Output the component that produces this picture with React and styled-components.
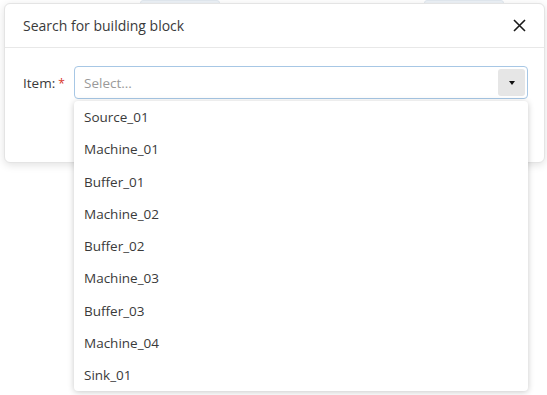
import React from "react";
import styled, { createGlobalStyle } from "styled-components";

const GlobalStyle = createGlobalStyle`
  html, body {
    margin: 0;
    padding: 0;
    background: #ffffff;
    font-family: "Open Sans", "Noto Sans", sans-serif;
    color: #3a3a3a;
  }
`;

const Page = styled.div`
  position: relative;
  width: 547px;
  height: 395px;
  overflow: hidden;
  background: #fff;
`;

const Toolbar = styled.div`
  display: flex;
  gap: 204px;
  padding: 0 0 0 140px;
`;

const GhostButton = styled.div`
  width: 78px;
  height: 28px;
  background: #eef3f8;
  border: 1px solid #e2e9f0;
  border-radius: 3px;
`;

const Modal = styled.div`
  position: absolute;
  top: 3px;
  left: 4px;
  width: 539px;
  background: #fff;
  border: 1px solid #e4e4e4;
  border-radius: 6px;
  box-shadow: 0 2px 8px rgba(0, 0, 0, 0.12);
`;

const Header = styled.div`
  display: flex;
  align-items: center;
  justify-content: space-between;
  height: 43px;
  padding: 0 17px 0 18px;
  border-bottom: 1px solid #e8e8e8;
`;

const Title = styled.h5`
  margin: 0;
  font-size: 14px;
  font-weight: 400;
  color: #3a3a3a;
`;

const CloseButton = styled.button`
  display: flex;
  align-items: center;
  justify-content: center;
  width: 16px;
  height: 16px;
  padding: 0;
  border: none;
  background: none;
  cursor: pointer;
`;

const Body = styled.div`
  padding: 18px 16px 0 18px;
  height: 96px;
`;

const Field = styled.div`
  display: flex;
  align-items: center;
`;

const Label = styled.label`
  width: 51px;
  font-size: 13.5px;
  color: #3a3a3a;
`;

const Required = styled.span`
  color: #d9342b;
  margin-left: 3px;
  font-size: 12px;
`;

const SelectWrap = styled.div`
  position: relative;
  flex: 1;
`;

const SelectBox = styled.div`
  display: flex;
  align-items: center;
  height: 33px;
  box-sizing: border-box;
  padding: 2px 2px 2px 9px;
  border: 1px solid #a7c7e5;
  border-radius: 4px;
  background: #fff;
`;

const Placeholder = styled.span`
  flex: 1;
  font-size: 13.5px;
  color: #9a9a9a;
`;

const Toggle = styled.div`
  display: flex;
  align-items: center;
  justify-content: center;
  width: 27px;
  height: 100%;
  background: #e6e6e6;
  border-radius: 3px;
`;

const Caret = styled.span`
  width: 0;
  height: 0;
  border-left: 3.5px solid transparent;
  border-right: 3.5px solid transparent;
  border-top: 4px solid #111;
`;

const Menu = styled.ul`
  position: absolute;
  top: calc(100% + 2px);
  left: 0;
  right: 0;
  margin: 0;
  padding: 0;
  list-style: none;
  background: #fff;
  border-radius: 4px;
  box-shadow: 0 1px 6px rgba(0, 0, 0, 0.22);
  z-index: 10;
`;

const Option = styled.li`
  display: flex;
  align-items: center;
  height: 32.25px;
  padding: 0 10px;
  font-size: 13.5px;
  color: #3a3a3a;
`;

const items = [
  "Source_01",
  "Machine_01",
  "Buffer_01",
  "Machine_02",
  "Buffer_02",
  "Machine_03",
  "Buffer_03",
  "Machine_04",
  "Sink_01",
];

export default function App() {
  return (
    <Page>
      <GlobalStyle />
      <Toolbar>
        <GhostButton />
        <GhostButton />
      </Toolbar>
      <Modal>
        <Header>
          <Title>Search for building block</Title>
          <CloseButton aria-label="Close">
            <svg width="13" height="13" viewBox="0 0 13 13">
              <path d="M1 1 L12 12 M12 1 L1 12" stroke="#1a1a1a" strokeWidth="1.6" />
            </svg>
          </CloseButton>
        </Header>
        <Body>
          <Field>
            <Label>
              Item:<Required>*</Required>
            </Label>
            <SelectWrap>
              <SelectBox>
                <Placeholder>Select...</Placeholder>
                <Toggle>
                  <Caret />
                </Toggle>
              </SelectBox>
              <Menu>
                {items.map((it) => (
                  <Option key={it}>{it}</Option>
                ))}
              </Menu>
            </SelectWrap>
          </Field>
        </Body>
      </Modal>
    </Page>
  );
}
